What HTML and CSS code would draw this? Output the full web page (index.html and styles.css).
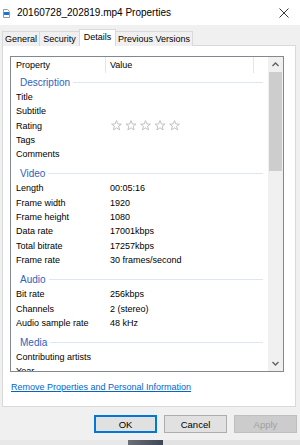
FILE: index.html
```html
<!DOCTYPE html>
<html>
<head>
<meta charset="utf-8">
<link rel="stylesheet" href="styles.css">
</head>
<body>
<div class="window">
  <div class="titlebar">
    <svg class="file-icon" width="7" height="9" viewBox="0 0 7 9">
      <path d="M0.5 0.5 H4.5 L6.5 2.5 V8.5 H0.5 Z" fill="#fff" stroke="#9a9a9a" stroke-width="1"/>
      <rect x="1" y="3" width="5" height="3" fill="#1e73d2"/>
    </svg>
    <span class="title">20160728_202819.mp4 Properties</span>
    <svg class="close" width="10" height="10" viewBox="0 0 10 10">
      <path d="M0.5 0.5 L9.5 9.5 M9.5 0.5 L0.5 9.5" stroke="#222" stroke-width="0.9"/>
    </svg>
  </div>
  <div class="tabs">
    <div class="tab t-general">General</div>
    <div class="tab t-security">Security</div>
    <div class="tab t-details active">Details</div>
    <div class="tab t-prev">Previous Versions</div>
  </div>
  <div class="panel">
    <div class="list">
      <div class="list-content">
        <div class="header">
          <div class="hcol c1">Property</div>
          <div class="hcol c2">Value</div>
          <div class="hcol c3"></div>
        </div>
        <div class="group first"><span>Description</span><i></i></div>
        <div class="row"><span class="k">Title</span><span class="v"></span></div>
        <div class="row"><span class="k">Subtitle</span><span class="v"></span></div>
        <div class="row"><span class="k">Rating</span><span class="v stars">
          <svg width="72" height="11" viewBox="0 0 72 11">
            <g fill="none" stroke="#b4b4b4" stroke-width="0.8" stroke-linejoin="round">
              <polygon points="5.5,0.6 6.9,4 10.4,4.1 7.6,6.3 8.6,9.9 5.5,7.8 2.4,9.9 3.4,6.3 0.6,4.1 4.1,4"/>
              <polygon transform="translate(14.5 0)" points="5.5,0.6 6.9,4 10.4,4.1 7.6,6.3 8.6,9.9 5.5,7.8 2.4,9.9 3.4,6.3 0.6,4.1 4.1,4"/>
              <polygon transform="translate(29 0)" points="5.5,0.6 6.9,4 10.4,4.1 7.6,6.3 8.6,9.9 5.5,7.8 2.4,9.9 3.4,6.3 0.6,4.1 4.1,4"/>
              <polygon transform="translate(43.5 0)" points="5.5,0.6 6.9,4 10.4,4.1 7.6,6.3 8.6,9.9 5.5,7.8 2.4,9.9 3.4,6.3 0.6,4.1 4.1,4"/>
              <polygon transform="translate(58 0)" points="5.5,0.6 6.9,4 10.4,4.1 7.6,6.3 8.6,9.9 5.5,7.8 2.4,9.9 3.4,6.3 0.6,4.1 4.1,4"/>
            </g>
          </svg>
        </span></div>
        <div class="row"><span class="k">Tags</span><span class="v"></span></div>
        <div class="row"><span class="k">Comments</span><span class="v"></span></div>
        <div class="group"><span>Video</span><i></i></div>
        <div class="row"><span class="k">Length</span><span class="v">00:05:16</span></div>
        <div class="row"><span class="k">Frame width</span><span class="v">1920</span></div>
        <div class="row"><span class="k">Frame height</span><span class="v">1080</span></div>
        <div class="row"><span class="k">Data rate</span><span class="v">17001kbps</span></div>
        <div class="row"><span class="k">Total bitrate</span><span class="v">17257kbps</span></div>
        <div class="row"><span class="k">Frame rate</span><span class="v">30 frames/second</span></div>
        <div class="group"><span>Audio</span><i></i></div>
        <div class="row"><span class="k">Bit rate</span><span class="v">256kbps</span></div>
        <div class="row"><span class="k">Channels</span><span class="v">2 (stereo)</span></div>
        <div class="row"><span class="k">Audio sample rate</span><span class="v">48 kHz</span></div>
        <div class="group"><span>Media</span><i></i></div>
        <div class="row"><span class="k">Contributing artists</span><span class="v"></span></div>
        <div class="row"><span class="k">Year</span><span class="v"></span></div>
      </div>
      <div class="scrollbar">
        <div class="sb-btn">
          <svg width="7" height="5" viewBox="0 0 7 5"><path d="M0.5 4 L3.5 1 L6.5 4" fill="none" stroke="#606060" stroke-width="1.3"/></svg>
        </div>
        <div class="track"><div class="thumb"></div></div>
        <div class="sb-btn">
          <svg width="7" height="5" viewBox="0 0 7 5"><path d="M0.5 1 L3.5 4 L6.5 1" fill="none" stroke="#606060" stroke-width="1.3"/></svg>
        </div>
      </div>
    </div>
    <a class="link" href="#">Remove Properties and Personal Information</a>
  </div>
  <div class="buttons">
    <div class="btn default">OK</div>
    <div class="btn">Cancel</div>
    <div class="btn disabled">Apply</div>
  </div>
  <div class="taskbar"></div>
</div>
</body>
</html>
```

FILE: styles.css
```css
* { box-sizing: border-box; }
html, body { margin: 0; padding: 0; }
body {
  width: 300px;
  height: 445px;
  overflow: hidden;
  background: #f0f0f0;
  font-family: "Liberation Sans", Arial, sans-serif;
  font-size: 9px;
  color: #000;
}
.window { display: flex; flex-direction: column; width: 300px; height: 445px; }

.titlebar {
  height: 25px;
  background: #fff;
  display: flex;
  align-items: center;
  padding-left: 3px;
  padding-right: 11px;
}
.file-icon { flex: none; margin-top: 1px; }
.title { font-size: 10px; margin-left: 7px; flex: 1; color: #000; }
.close { flex: none; margin-top: 1px; }

.tabs {
  height: 21px;
  display: flex;
  align-items: flex-end;
  padding-left: 2px;
  position: relative;
  z-index: 1;
  margin-bottom: -1px;
}
.tab {
  height: 15px;
  border: 1px solid #d9d9d9;
  border-bottom: none;
  background: #f0f0f0;
  display: flex;
  align-items: center;
  justify-content: center;
  margin-left: -1px;
  line-height: 1;
}
.t-general { margin-left: 0; width: 38px; }
.t-security { width: 41px; }
.t-details { width: 37px; }
.t-prev { width: 78px; }
.tab.active { height: 17px; background: #fff; padding-bottom: 1px; }

.panel {
  margin-left: 2px;
  width: 294px;
  height: 362px;
  background: #fff;
  border: 1px solid #d9d9d9;
  padding: 10px 0 0 7px;
  display: flex;
  flex-direction: column;
}
.list {
  width: 274px;
  height: 316px;
  border: 1px solid #828790;
  display: flex;
  overflow: hidden;
}
.list-content { flex: 1; overflow: hidden; }

.header { display: flex; height: 17px; }
.hcol { height: 16px; line-height: 17px; border-right: 1px solid #e5e5e5; padding-left: 5px; }
.c1 { width: 95px; }
.c2 { width: 148px; padding-left: 4px; }
.c3 { flex: 1; border-right: none; }

.group {
  height: 16px;
  margin-top: 4px;
  display: flex;
  align-items: center;
  padding-left: 9px;
  padding-right: 5px;
  color: #2f62bd;
  font-size: 10px;
}
.group.first { margin-top: 0; }
.group i { flex: 1; height: 1px; background: #dfe6f3; margin-left: 3px; }

.row { display: flex; height: 14.3px; line-height: 14.3px; padding-left: 5px; white-space: nowrap; }
.k { width: 94px; flex: none; }
.v { flex: 1; }
.stars { display: flex; align-items: center; padding-left: 1px; }
.stars svg { display: block; }

.scrollbar {
  width: 15px;
  flex: none;
  background: #f0f0f0;
  display: flex;
  flex-direction: column;
}
.sb-btn { height: 15px; display: flex; align-items: center; justify-content: center; }
.track { flex: 1; }
.thumb { height: 99px; margin: 0 1px; background: #cdcdcd; }

.link {
  margin-top: 10px;
  margin-left: 1px;
  color: #0066cc;
  text-decoration: underline;
  font-size: 9px;
  line-height: 11px;
  align-self: flex-start;
}

.buttons {
  height: 33px;
  display: flex;
  justify-content: flex-end;
  align-items: flex-start;
  padding-top: 8px;
  padding-right: 3px;
  gap: 7px;
}
.btn {
  width: 63px;
  height: 18px;
  border: 1px solid #adadad;
  background: #e1e1e1;
  display: flex;
  align-items: center;
  justify-content: center;
  font-size: 9.5px;
}
.btn.default { border: 1px solid #0078d7; box-shadow: inset 0 0 0 1px #0078d7; }
.btn.disabled { background: #cccccc; border-color: #bfbfbf; color: #a0a0a0; }

.taskbar {
  flex: 1;
  background: linear-gradient(to right, #e8e8e8 0, #e8e8e8 128px, #6b6f78 128px, #3e4655 163px, #e2e2e2 163px, #e2e2e2 100%);
}
```
